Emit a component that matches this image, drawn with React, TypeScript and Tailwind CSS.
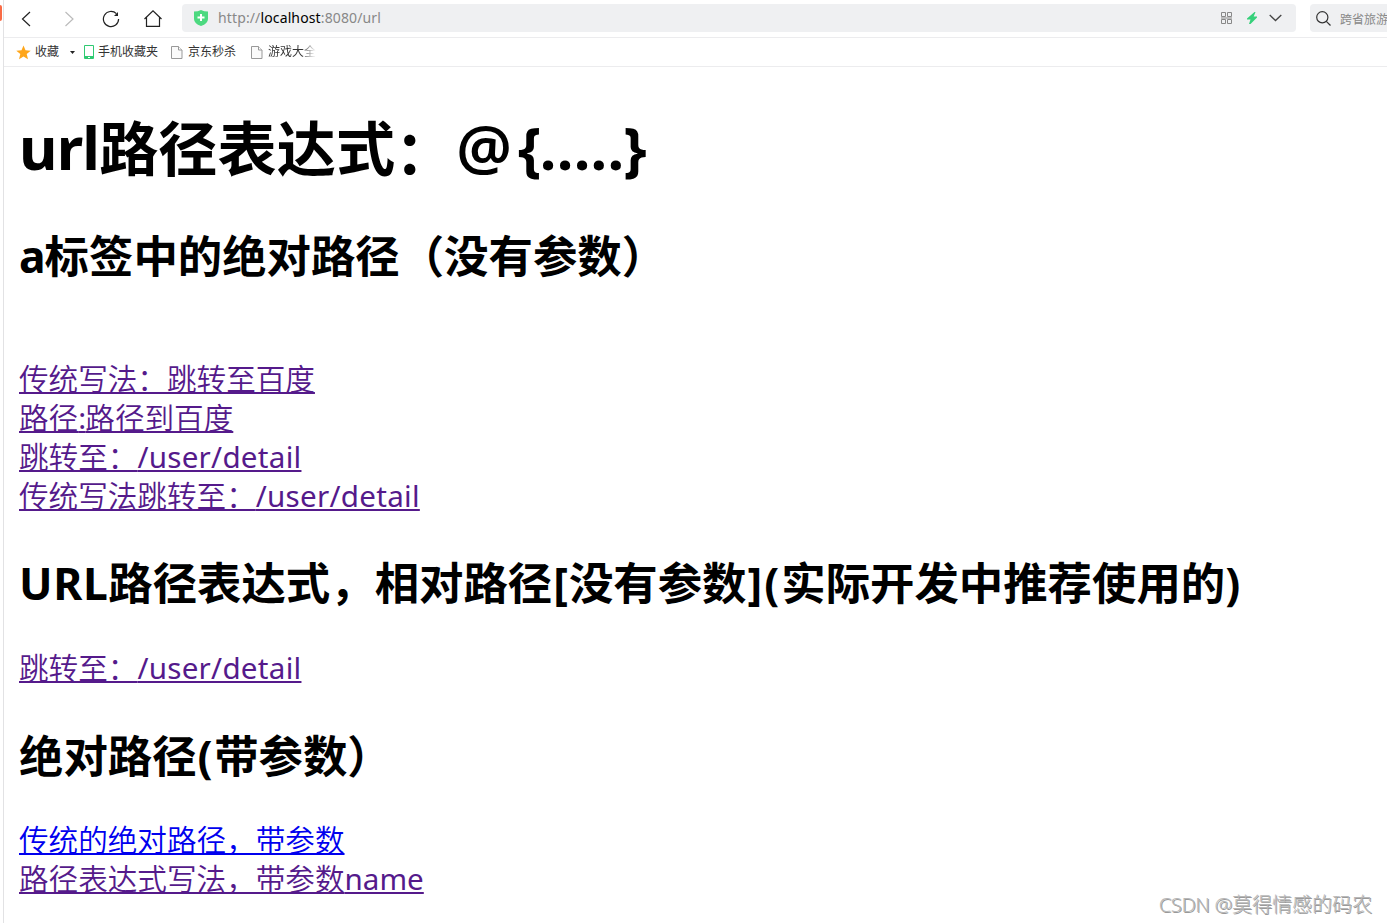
import React from 'react';

interface BookmarkProps {
  label: string;
  className: string;
  faded?: boolean;
}

const FileIcon = () => (
  <svg width="12" height="14" viewBox="0 0 12 14" fill="#fafafa" stroke="#999" strokeWidth="1">
    <path d="M.5 1.5h7l3.500 3.500v8.500H.5z" />
    <path d="M7.500 1.500V5H11" />
  </svg>
);

const Bookmark: React.FC<BookmarkProps> = ({ label, className, faded }) => (
  <div className={`flex items-center ${className}`}>
    <FileIcon />
    <span
      className={`ml-[5px] whitespace-nowrap ${
        faded ? 'bg-linear-to-r from-[#333] from-70% to-transparent bg-clip-text text-transparent' : ''
      }`}
    >
      {label}
    </span>
  </div>
);

const AddressBar = () => (
  <div className="ml-5 flex h-7 w-[1114px] shrink-0 items-center rounded bg-[#eff0f2] pl-3">
    <svg width="14" height="16" viewBox="0 0 14 16">
      <path d="M0 1.500Q4 1.500 7 0q3 1.500 7 1.500V9q0 4.500-7 7Q0 13.500 0 9z" fill="#4cd980" />
      <path d="M7 4v7M3.500 7.500h7" stroke="#fff" strokeWidth="2" />
    </svg>
    <div className="ml-[10px] w-[180px] text-[14px] leading-7 tracking-[0.13px] text-[#888]">
      http://<span className="text-black">localhost</span>:8080/url
    </div>
    <svg className="ml-auto" width="12" height="12" viewBox="0 0 12 12" fill="none" stroke="#888">
      <path d="M.5.5h4v4h-4zM6.500.5h4v4h-4zM.5 7.500h4v4h-4zM6.500 7.500h4v4h-4zM0 6h11" />
    </svg>
    <svg className="ml-[14px]" width="10" height="12" viewBox="0 0 10 12" fill="#36d07a">
      <path d="M7.500 0 0 6.500V7.500h3.500L2 12h1.500L10 5.500V4.500H6.700L8.500 0z" />
    </svg>
    <svg className="mr-[14px] ml-3" width="13" height="8" viewBox="0 0 13 8" fill="none" stroke="#444" strokeWidth="1.300">
      <path d="m.7 1 5.800 5.500L12.300 1" />
    </svg>
  </div>
);

const Toolbar = () => (
  <div className="flex h-[38px] items-start overflow-hidden border-b border-[#ececee] pt-1">
    <div className="flex h-7 shrink-0 items-center">
      <svg className="mt-[2px] ml-[17px]" width="11" height="16" viewBox="0 0 11 16" fill="none" stroke="#222" strokeWidth="1.200">
        <path d="M9 1 1.500 8 9 15" />
      </svg>
      <svg className="mt-[2px] ml-8" width="11" height="16" viewBox="0 0 11 16" fill="none" stroke="#bbb" strokeWidth="1.200">
        <path d="m1.500 1 7.500 7-7.500 7" />
      </svg>
      <svg className="mt-[2px] ml-[27px]" width="18" height="18" viewBox="0 0 18 18" fill="none" stroke="#222" strokeWidth="1.200">
        <path d="M16.600 9A7.600 7.600 0 1 1 14.400 3.700" />
        <path d="M16 2v4h-4z" fill="#222" stroke="none" />
      </svg>
      <svg className="mt-[1px] ml-6" width="18" height="17" viewBox="0 0 18 17" fill="none" stroke="#222" strokeWidth="1.200">
        <path d="M.5 9 9 .9 17.500 9M2.500 7.500v8.900h13V7.500" />
      </svg>
    </div>
    <AddressBar />
    <div className="ml-[14px] flex h-7 w-40 shrink-0 items-center rounded-l bg-[#eff0f2] pl-[6px]">
      <svg width="15" height="15" viewBox="0 0 15 15" fill="none" stroke="#333" strokeWidth="1.200">
        <circle cx="6.300" cy="6.300" r="5.600" />
        <path d="m10.300 10.300 4.200 4.200" />
      </svg>
      <span className="mt-[4px] ml-[9px] text-[12px] leading-[18px] whitespace-nowrap text-[#888]">跨省旅游</span>
    </div>
  </div>
);

const BookmarksBar = () => (
  <div className="flex h-[29px] items-center border-b border-[#ececee] pl-3 text-[12px] leading-4 text-[#333]">
    <svg width="15" height="15" viewBox="0 0 15 15" fill="#ffa61a">
      <path d="m7.500.5 2 4.800 5.200.4-4 3.400 1.300 5.200-4.500-2.800L3 14.300l1.300-5.200-4-3.400 5.200-.4z" />
    </svg>
    <span className="ml-1">收藏</span>
    <svg className="ml-[11px]" width="5" height="3" viewBox="0 0 5 3" fill="#222">
      <path d="M0 0h5L2.500 3z" />
    </svg>
    <svg className="ml-[9px]" width="10" height="14" viewBox="0 0 10 14">
      <rect width="10" height="14" rx="1" fill="#2fca72" />
      <path d="M1 1h8v10H1z" fill="#fff" />
      <path d="M4 12.500h2" stroke="#fff" />
    </svg>
    <span className="ml-1">手机收藏夹</span>
    <Bookmark label="京东秒杀" className="ml-[13px]" />
    <Bookmark label="游戏大全" className="ml-[15px]" faded />
  </div>
);

const linkClass =
  'block w-fit underline decoration-2 underline-offset-[2px] [text-decoration-skip-ink:none]';

const UserDetail = () => <span className="font-normal tracking-[0.27px]">/user/detail</span>;

const Content = () => (
  <main className="pl-[15px] text-[29.6px] leading-[39px] font-[350] whitespace-nowrap text-[#551a8b]">
    <h1 className="mt-10 h-20 text-[59.2px] leading-[80px] font-bold text-black">
      <span className="tracking-[-0.8px]">url</span>
      <span className="relative top-px">路径表达式</span>
      <span className="relative top-1">：</span>
      <span className="ml-[2px] text-[62px] leading-none font-semibold tracking-[6px]">@</span>
      <span className="tracking-[-1.500px]">{'{'}</span>
      <span className="tracking-[0.3px]">....</span>
      <span className="tracking-[-1px]">.</span>
      <span>{'}'}</span>
    </h1>
    <h2 className="mt-[39px] text-[44.4px] leading-[60px] font-bold text-black">
      <span className="tracking-[-1px]">a</span>标签中的绝对路径（没有参数）
    </h2>
    <div className="mt-[73px]">
      <a className={linkClass}>传统写法：跳转至百度</a>
      <a className={linkClass}>
        路径<span className="font-normal tracking-[-0.8px]">:</span>路径到百度
      </a>
      <a className={linkClass}>
        跳转至：<UserDetail />
      </a>
      <a className={linkClass}>
        传统写法跳转至：<UserDetail />
      </a>
    </div>
    <h2 className="mt-[38px] text-[44.4px] leading-[60px] font-bold text-black">
      <span className="tracking-[0.6px]">URL</span>路径表达式，相对路径
      <span className="ml-px tracking-[1px]">[</span>没有参数
      <span className="ml-px tracking-[2px]">](</span>
      实际开发中推荐使用的)
    </h2>
    <div className="mt-[35px]">
      <a className={linkClass}>
        跳转至：<UserDetail />
      </a>
    </div>
    <h2 className="mt-[39px] text-[44.4px] leading-[60px] font-bold text-black">
      绝对路径<span className="ml-px tracking-[1.500px]">(</span>带参数）
    </h2>
    <div className="mt-[34px]">
      <a className={`${linkClass} text-[#0000ee]`}>传统的绝对路径，带参数</a>
      <a className={linkClass}>
        路径表达式写法，带参数<span className="font-normal">name</span>
      </a>
    </div>
  </main>
);

export default function App() {
  return (
    <div
      lang="zh-CN"
      className="relative flex h-[923px] w-[1387px] overflow-hidden bg-white font-['Noto_Sans','Noto_Sans_CJK_SC',sans-serif]"
    >
      <div className="w-1 shrink-0 border-r border-[#e2e2e4] pt-[5px]">
        <div className="h-4 w-[2px] rounded-r-sm bg-[#f96b45]" />
      </div>
      <div className="min-w-0 flex-1">
        <Toolbar />
        <BookmarksBar />
        <Content />
      </div>
      <div className="absolute right-[15px] bottom-1 text-[20px] leading-7 font-light text-[#b8b8b8] [text-shadow:1px_1px_0_#999]">
        <span className="tracking-[-0.3px]">CSDN @</span>莫得情感的码农
      </div>
    </div>
  );
}
